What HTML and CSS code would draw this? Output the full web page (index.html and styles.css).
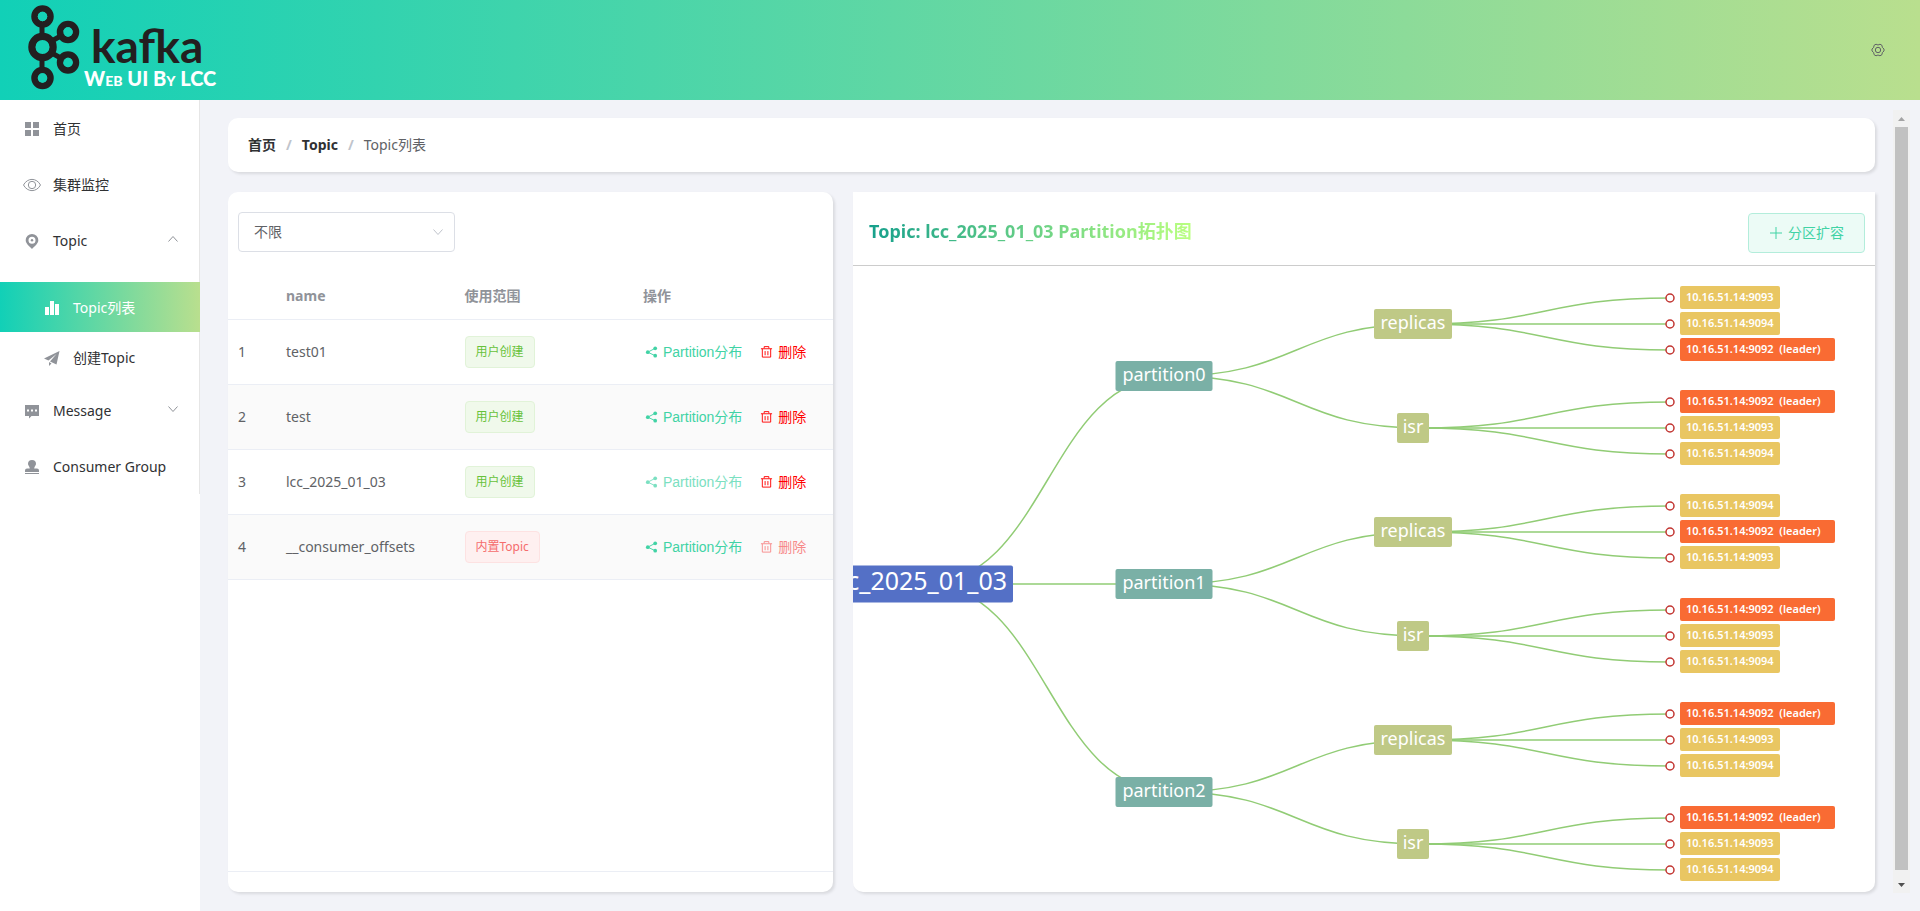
FILE: index.html
```html
<!DOCTYPE html>
<html lang="zh-CN">
<head>
<meta charset="utf-8">
<title>Kafka Web UI</title>
<link rel="stylesheet" href="styles.css">
</head>
<body>
<svg class="sprite" aria-hidden="true">
  <symbol id="i-share" viewBox="0 0 14 14"><path d="M11 3 3 7.2l8 3.8" fill="none" stroke="currentColor"/><circle cx="11" cy="3" r="2" fill="currentColor"/><circle cx="3" cy="7.2" r="2" fill="currentColor"/><circle cx="11" cy="11" r="2" fill="currentColor"/></symbol>
  <symbol id="i-trash" viewBox="0 0 14 14"><path d="M1 3.500h12M4.500 3V1.200h5V3M2.500 3.500v9h9v-9M5.500 6v4.500M8.500 6v4.500" fill="none" stroke="currentColor"/></symbol>
  <symbol id="i-down" viewBox="0 0 12 12"><path d="M1.500 3.500 6 8.500l4.500-5" fill="none" stroke="currentColor"/></symbol>
</svg>

<header class="header">
  <svg class="logo" viewBox="0 0 240 100" role="img" aria-label="kafka Web UI By LCC">
    <g fill="none" stroke="#231f20">
      <path d="M42 27v45M50 42l16-9M50 52l16 9" stroke-width="5"/>
      <g stroke-width="6.500">
        <circle cx="42.500" cy="16.500" r="8"/><circle cx="68" cy="32" r="8"/>
        <circle cx="68" cy="62.500" r="8"/><circle cx="42.500" cy="78" r="8"/>
      </g>
      <circle cx="42.500" cy="47" r="10.500" stroke-width="7.500"/>
    </g>
    <g fill="#15d1b6"><circle cx="42.500" cy="16.500" r="4.700"/><circle cx="68" cy="32" r="4.700"/><circle cx="68" cy="62.500" r="4.700"/><circle cx="42.500" cy="78" r="4.700"/><circle cx="42.500" cy="47" r="7"/></g>
    <text class="logo-name" x="91" y="63">kafka</text>
    <text class="logo-sub" x="84" y="86">Web UI By LCC</text>
  </svg>
  <button class="gear" type="button" aria-label="设置">
    <svg viewBox="0 0 14 14"><path d="M5 1.200 7 2l2-.8 2 1.200.3 2L13 6v2l-1.700 1.600-.3 2L9 12.800 7 12l-2 .8-2-1.200-.3-2L1 8V6l1.700-1.600.3-2z" fill="none" stroke="currentColor"/><circle cx="7" cy="7" r="2.700" fill="none" stroke="currentColor"/></svg>
  </button>
</header>

<div class="body">
  <nav class="sidebar">
    <ul class="menu">
      <li><a class="item" href="#"><svg class="mi" viewBox="0 0 18 18"><path d="M2 2h6v6H2zM10 2h6v6h-6zM2 10h6v6H2zM10 10h6v6h-6z"/></svg>首页</a></li>
      <li><a class="item" href="#"><svg class="mi line" viewBox="0 0 18 18"><path d="M.5 9C4.500 1.500 13.500 1.500 17.500 9 13.500 16.500 4.500 16.500.5 9z"/><circle cx="9" cy="9" r="3.700"/></svg>集群监控</a></li>
      <li>
        <a class="item" href="#"><svg class="mi" viewBox="0 0 18 18"><path fill-rule="evenodd" d="M9 2a6.300 6.300 0 0 1 6.300 6.300C15.300 11.500 12 14 9 17 6 14 2.700 11.500 2.700 8.300A6.300 6.300 0 0 1 9 2zm0 2.800a3.500 3.500 0 1 0 0 7 3.500 3.500 0 0 0 0-7z"/><circle cx="9" cy="8.300" r="1.200"/></svg>Topic<svg class="arrow up"><use href="#i-down"/></svg></a>
        <ul class="submenu">
          <li><a class="item sub active" href="#"><svg class="mi" viewBox="0 0 18 18"><path d="M2 8h4v8H2zM7 2h4v14H7zM12 5h4v11h-4z"/></svg>Topic列表</a></li>
          <li><a class="item sub" href="#"><svg class="mi" viewBox="0 0 18 18"><path d="M16.500 2 1 9.500 5.500 11.500 13.500 5 7 12.500 13.500 15.500zM6 13v4l2.500-2.500z"/></svg>创建Topic</a></li>
        </ul>
      </li>
      <li><a class="item" href="#"><svg class="mi" viewBox="0 0 18 18"><path fill-rule="evenodd" d="M2 3h14v11H8.500L6 16.500V14H2zM4 7.500v2h2v-2zm4 0v2h2v-2zm4 0v2h2v-2z"/></svg>Message<svg class="arrow"><use href="#i-down"/></svg></a></li>
      <li><a class="item" href="#"><svg class="mi" viewBox="0 0 18 18"><path d="M9 2a4 4 0 0 1 4 4c0 1.600-1.800 2.500-1.800 4.500H14q2 0 2 2V14H2v-1.500q0-2 2-2h2.800C6.800 8.500 5 7.600 5 6a4 4 0 0 1 4-4zM2 15h14v1H2z"/></svg>Consumer Group</a></li>
    </ul>
  </nav>

  <main class="main">
    <div class="content">
      <nav class="card crumbs" aria-label="breadcrumb">
        <a href="#">首页</a><span class="sep">/</span><a href="#">Topic</a><span class="sep">/</span><span>Topic列表</span>
      </nav>
      <div class="columns">
        <section class="card list">
          <div class="filter">
            <label class="select-wrap"><select class="select" aria-label="使用范围"><option>不限</option><option>用户创建</option><option>内置Topic</option></select><svg class="select-arrow"><use href="#i-down"/></svg></label>
          </div>
          <div class="table-box">
            <table class="table">
              <colgroup><col class="c-index"><col><col><col class="c-ops"></colgroup>
              <thead><tr><th></th><th>name</th><th>使用范围</th><th>操作</th></tr></thead>
              <tbody>
                <tr><td>1</td><td>test01</td><td><span class="tag">用户创建</span></td><td><div class="ops"><button type="button" class="op"><svg><use href="#i-share"/></svg>Partition分布</button><button type="button" class="op del"><svg><use href="#i-trash"/></svg>删除</button></div></td></tr>
                <tr><td>2</td><td>test</td><td><span class="tag">用户创建</span></td><td><div class="ops"><button type="button" class="op"><svg><use href="#i-share"/></svg>Partition分布</button><button type="button" class="op del"><svg><use href="#i-trash"/></svg>删除</button></div></td></tr>
                <tr><td>3</td><td>lcc_2025_01_03</td><td><span class="tag">用户创建</span></td><td><div class="ops"><button type="button" class="op current"><svg><use href="#i-share"/></svg>Partition分布</button><button type="button" class="op del"><svg><use href="#i-trash"/></svg>删除</button></div></td></tr>
                <tr><td>4</td><td>__consumer_offsets</td><td><span class="tag danger">内置Topic</span></td><td><div class="ops"><button type="button" class="op"><svg><use href="#i-share"/></svg>Partition分布</button><button type="button" class="op del" disabled><svg><use href="#i-trash"/></svg>删除</button></div></td></tr>
              </tbody>
            </table>
          </div>
        </section>

        <section class="card topo">
          <div class="topo-head">
            <h1 class="topo-title">Topic: lcc_2025_01_03 Partition拓扑图</h1>
            <button class="expand" type="button"><svg viewBox="0 0 14 14"><path d="M7 1v12M1 7h12" stroke="currentColor"/></svg>分区扩容</button>
          </div>
          <svg class="graph" id="graph" viewBox="0 0 1022 626"></svg>
        </section>
      </div>
    </div>
    <div class="scrollbar" aria-hidden="true">
      <svg class="sb-arrow dim" viewBox="0 0 17 17"><path d="M5 11h7L8.500 7z"/></svg>
      <div class="thumb"></div>
      <svg class="sb-arrow" viewBox="0 0 17 17"><path d="M5 7h7l-3.500 4z"/></svg>
    </div>
  </main>
</div>
<script src="graph.js"></script>
</body>
</html>
```
FILE: styles.css
```css
* { box-sizing: border-box; }
body {
  margin: 0;
  min-height: 100vh;
  display: flex;
  flex-direction: column;
  background: #f2f3f8;
  color: #303133;
  font: 14px/20px "Noto Sans", "Noto Sans CJK SC", sans-serif;
}
ul { list-style: none; margin: 0; padding: 0; }
a { color: inherit; text-decoration: none; }
button { font: 14px/20px "Liberation Sans", "Noto Sans CJK SC", sans-serif; cursor: pointer; }
.sprite { position: absolute; width: 0; height: 0; }

.header {
  height: 100px;
  display: flex;
  align-items: center;
  justify-content: space-between;
  padding-right: 35px;
  background: linear-gradient(90deg, #11d0b7, #b9df8e);
}
.logo { width: 240px; height: 100px; }
.logo-name { font: 700 46px Lato, sans-serif; fill: #231f20; }
.logo-sub { font: 900 20px Lato, sans-serif; font-variant: small-caps; fill: #fff; }
.gear { border: 0; background: none; padding: 0; color: #606266; width: 14px; height: 14px; display: flex; }
.gear svg { width: 14px; height: 14px; }

.body { flex: 1; display: flex; }
.sidebar { width: 200px; flex: none; background: #fff; }
.menu { border-right: 1px solid #e6e6e6; }
.item { height: 56px; display: flex; align-items: center; padding: 2px 20px 0 23px; }
.mi { width: 18px; height: 18px; margin-right: 12px; fill: #909399; flex: none; }
.mi.line { fill: none; stroke: #909399; }
.submenu { padding-top: 14px; }
.item.sub { height: 50px; padding-left: 43px; }
.item.active { color: #fff; margin-right: -1px; background: linear-gradient(90deg, #11d0b7, #b9df8e); }
.item.active .mi { fill: #fff; }
.arrow { width: 12px; height: 12px; margin-left: auto; margin-bottom: 4px; color: #909399; }
.arrow.up { transform: rotate(180deg); }

.main { flex: 1; min-width: 0; display: flex; gap: 18px; padding: 10px 10px 18px 28px; }
.content { flex: 1; min-width: 0; display: flex; flex-direction: column; gap: 20px; padding: 8px 0 1px; }
.card { background: #fff; border-radius: 10px; box-shadow: 2px 2px 3px #0000001a; }
.crumbs { height: 54px; display: flex; align-items: center; padding: 0 20px; color: #606266; }
.crumbs a { font-weight: 700; color: #303133; }
.sep { margin: 0 10px; color: #c0c4cc; font-weight: 700; }

.columns { flex: 1; display: grid; grid-template-columns: 605fr 1022fr; gap: 20px; }
.list { display: flex; flex-direction: column; padding: 20px 0; }
.filter { padding: 0 10px; }
.select-wrap { position: relative; display: block; width: 217px; }
.select {
  appearance: none;
  width: 100%;
  height: 40px;
  padding: 0 15px;
  border: 1px solid #dcdfe6;
  border-radius: 4px;
  background: #fff;
  color: #606266;
  font: inherit;
}
.select-arrow { position: absolute; right: 11px; top: 14px; width: 12px; height: 12px; color: #c0c4cc; pointer-events: none; }
.table-box { flex: 1; margin-top: 20px; border-bottom: 1px solid #ebeef5; color: #606266; }
.table { width: 100%; table-layout: fixed; border-collapse: separate; border-spacing: 0; }
.c-index { width: 48px; }
.c-ops { width: 200px; }
.table th, .table td { padding: 0 10px; text-align: left; border-bottom: 1px solid #ebeef5; }
.table th { height: 48px; color: #909399; }
.table td { height: 65px; }
.table tbody tr:nth-child(even) { background: #fafafa; }
.tag {
  display: inline-block;
  height: 32px;
  padding: 0 10px;
  border: 1px solid #e1f3d8;
  border-radius: 4px;
  background: #f0f9eb;
  color: #67c23a;
  font-size: 12px;
  line-height: 30px;
  vertical-align: middle;
}
.tag.danger { border-color: #fde2e2; background: #fef0f0; color: #f56c6c; }
.ops { display: flex; gap: 18px; padding-left: 2px; white-space: nowrap; }
.op { display: flex; align-items: center; gap: 5px; padding: 0; border: 0; background: none; color: #41d3a5; }
.op svg { width: 13px; height: 14px; }
.op.current { color: #7be0c1; }
.op.del { color: #ff0000; }
.op.del:disabled { color: #f78989; }

.topo { overflow: clip; overflow-clip-margin: 6px; border-radius: 0 0 10px 10px; }
.topo-head { height: 74px; display: flex; align-items: center; justify-content: space-between; padding: 8px 10px 0 16px; border-bottom: 1px solid #ccc; }
.topo-title {
  margin: 0 0 4px;
  font-size: 18px;
  line-height: 28px;
  color: transparent;
  background: linear-gradient(90deg, #16a08c, #baff80);
  background-clip: text;
}
.expand {
  height: 40px;
  display: flex;
  align-items: center;
  gap: 5px;
  padding: 0 20px;
  border: 1px solid #b3eddb;
  border-radius: 4px;
  background: #ecfbf6;
  color: #41d3a5;
}
.expand svg { width: 14px; height: 14px; }
.graph { display: block; width: 100%; height: auto; overflow: hidden; }
.link { fill: none; stroke: #91cc75; stroke-width: 1.5; }
.dot { fill: #fff; stroke: #c23531; stroke-width: 1.5; }
.node { fill: #fff; text-anchor: middle; }
.n-root { fill: #5470c6; }
.n-part { fill: #7ab0a6; }
.n-group { fill: #bfc986; }
.n-broker { fill: #e9c662; }
.n-leader { fill: #f96b33; }
.t-root { font-size: 25px; text-anchor: end; }
.t-mid { font-size: 18px; }
.t-leaf { font-size: 11px; font-weight: 600; text-anchor: start; white-space: pre; }

.scrollbar { width: 17px; display: flex; flex-direction: column; background: #f1f1f1; }
.sb-arrow { width: 17px; height: 17px; fill: #505050; }
.sb-arrow.dim { fill: #a3a3a3; }
.thumb { flex: 1; margin: 0 2px 6px; background: #c1c1c1; }
```
FILE: graph.js
```js
const graph = document.getElementById('graph');
const COLS = [70, 319, 568, 817];
const topic = {
  name: 'lcc_2025_01_03',
  partitions: [
    { name: 'partition0', replicas: ['9093', '9094', '9092*'], isr: ['9092*', '9093', '9094'] },
    { name: 'partition1', replicas: ['9094', '9092*', '9093'], isr: ['9092*', '9093', '9094'] },
    { name: 'partition2', replicas: ['9092*', '9093', '9094'], isr: ['9092*', '9093', '9094'] }
  ]
};

let links = '';
let nodes = '';

function link(x1, y1, x2, y2) {
  const mid = (x1 + x2) / 2;
  links += `<path class="link" d="M${x1} ${y1}C${mid} ${y1} ${mid} ${y2} ${x2} ${y2}"/>`;
}

function box(cx, cy, w, h, kind, size, label) {
  const root = size === 'root';
  nodes += `<rect class="n-${kind}" x="${cx - w / 2}" y="${cy - h / 2}" width="${w}" height="${h}" rx="2"/>` +
    `<text class="node t-${size}" x="${root ? cx + w / 2 - 6 : cx}" y="${cy + (root ? 6 : 5)}">${label}</text>`;
}

function leaf(y, broker) {
  const leader = broker.endsWith('*');
  const label = '10.16.51.14:' + broker.slice(0, 4) + (leader ? '  (leader)' : '');
  nodes += `<circle class="dot" cx="${COLS[3]}" cy="${y}" r="4"/>` +
    `<rect class="n-${leader ? 'leader' : 'broker'}" x="827" y="${y - 12}" width="${leader ? 155 : 100}" height="23" rx="2"/>` +
    `<text class="node t-leaf" x="833" y="${y + 3}">${label}</text>`;
}

const rootY = 318;
topic.partitions.forEach((p, i) => {
  const py = 110 + 208 * i;
  link(COLS[0], rootY, COLS[1], py);
  [['replicas', -52, 78], ['isr', 52, 32]].forEach(([key, dy, w]) => {
    const gy = py + dy;
    link(COLS[1], py, COLS[2], gy);
    p[key].forEach((broker, n) => {
      const y = gy + 26 * (n - 1);
      link(COLS[2], gy, COLS[3], y);
      leaf(y, broker);
    });
    box(560, gy, w, 30, 'group', 'mid', key);
  });
  box(311, py, 97, 30, 'part', 'mid', p.name);
});
box(62, rootY, 196, 37, 'root', 'root', topic.name);
graph.innerHTML = links + nodes;
```
